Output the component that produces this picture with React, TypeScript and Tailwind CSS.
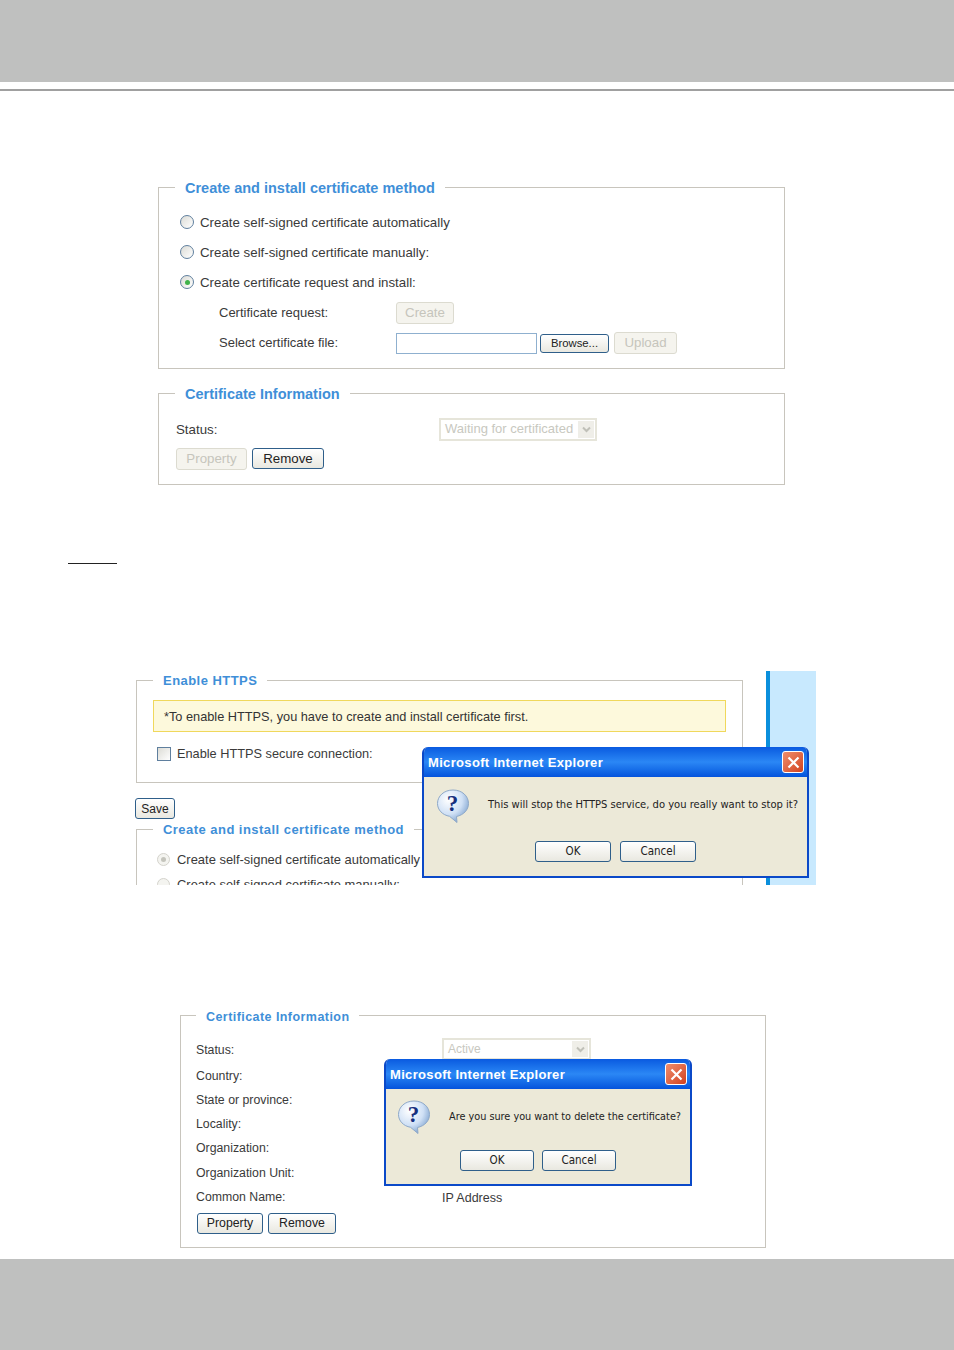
import type { ReactNode } from "react";

const sans = "font-['Liberation_Sans',Arial,sans-serif]";
const tahoma = "font-['DejaVu_Sans_Condensed','DejaVu_Sans',sans-serif]";

function Panel({ title, className, legendClass, children }: { title: string; className: string; legendClass: string; children: ReactNode }) {
  return (
    <fieldset className={`border border-[#c8c5bd] ${className}`}>
      <legend className={`font-bold leading-[16px] text-[#3f8fd8] ${legendClass}`}>{title}</legend>
      {children}
    </fieldset>
  );
}

function Radio({ checked, faded, size = "w-[14px] h-[14px]" }: { checked?: boolean; faded?: boolean; size?: string }) {
  return (
    <span
      className={`flex shrink-0 items-center justify-center rounded-full border ${size} ${
        faded ? "border-[#d4d3cc] bg-[#f4f4f0]" : "border-[#5f7f9e] bg-gradient-to-br from-[#dcdcd6] to-white"
      }`}
    >
      {checked && <span className={`h-[5px] w-[5px] rounded-full ${faded ? "bg-[#c4c4bc]" : "bg-[#3fb24a]"}`} />}
    </span>
  );
}

function Btn({ children, className, disabled }: { children: ReactNode; className: string; disabled?: boolean }) {
  return (
    <div
      className={`flex shrink-0 items-center justify-center rounded-[3px] border ${
        disabled
          ? "border-[#dcdbd0] bg-[#f5f4ee] text-[#c6c5bc]"
          : "border-[#2f5f8a] bg-gradient-to-b from-white to-[#e9e8e0] text-[#222]"
      } ${className}`}
    >
      {children}
    </div>
  );
}

function DisabledSelect({ label, className }: { label: string; className: string }) {
  return (
    <div className={`flex items-center border-2 border-[#e6e5da] bg-white p-px text-[#c8c8c0] ${className}`}>
      <span className="flex-1 whitespace-nowrap pl-[3px]">{label}</span>
      <span className="flex h-full w-[16px] shrink-0 items-center justify-center bg-[#efeee8]">
        <svg width="9" height="7" viewBox="0 0 9 7" fill="none" stroke="#c0c0b8" strokeWidth="2">
          <path d="M1 1.500 4.500 5 8 1.500" />
        </svg>
      </span>
    </div>
  );
}

function QuestionIcon() {
  return (
    <svg width="34" height="34" viewBox="0 0 34 34" className="shrink-0">
      <defs>
        <radialGradient id="bubble" cx="35%" cy="30%" r="75%">
          <stop offset="0%" stopColor="#ffffff" />
          <stop offset="60%" stopColor="#cfe0f5" />
          <stop offset="100%" stopColor="#7fa3cf" />
        </radialGradient>
      </defs>
      <path
        d="M17 1C8 1 1.500 7 1.500 14.500 1.500 21 6.500 26 13.500 27.300L21 33.500 20.500 27.500C27.500 26 32.500 21 32.500 14.500 32.500 7 26 1 17 1Z"
        fill="url(#bubble)"
        stroke="#8fa9c8"
      />
      <text x="16.500" y="22" textAnchor="middle" fontSize="23" fontWeight="700" fontFamily="'Liberation Serif',serif" fill="#16307f">
        ?
      </text>
    </svg>
  );
}

function Dialog({ message, className, iconClass, messageClass, footerClass, okClass, cancelClass }: {
  message: string;
  className: string;
  iconClass: string;
  messageClass: string;
  footerClass: string;
  okClass: string;
  cancelClass: string;
}) {
  return (
    <div className={`absolute flex flex-col overflow-hidden rounded-t-[6px] border-[2px] border-t-0 border-[#0b49c8] bg-[#ece9d8] ${tahoma} ${className}`}>
      <div className="-mx-[2px] flex h-[30px] shrink-0 items-center justify-between bg-gradient-to-b from-[#0a5ae0] via-[#2b87f5] to-[#0553dc] pl-[6px] pr-[5px]">
        <span className={`${sans} translate-y-px text-[13px] font-bold tracking-[0.33px] text-white`}>Microsoft Internet Explorer</span>
        <span className="flex h-[22px] w-[22px] items-center justify-center rounded-[3px] border border-white bg-gradient-to-br from-[#ee8d6c] to-[#d2401a]">
          <svg width="13" height="13" viewBox="0 0 13 13" stroke="#fff" strokeWidth="2.200">
            <path d="M1.500 1.500 11.500 11.500M11.500 1.500 1.500 11.500" />
          </svg>
        </span>
      </div>
      <div className={`flex items-center ${iconClass}`}>
        <QuestionIcon />
        <span className={`ml-[18px] whitespace-nowrap text-[#222] ${messageClass}`}>{message}</span>
      </div>
      <div className={`flex justify-center text-[11.500px] ${footerClass}`}>
        <Btn className={okClass}>OK</Btn>
        <Btn className={cancelClass}>Cancel</Btn>
      </div>
    </div>
  );
}

const certRows = ["Country:", "State or province:", "Locality:", "Organization:", "Organization Unit:", "Common Name:"];

export default function App() {
  return (
    <div className={`flex h-[1350px] w-[954px] flex-col overflow-hidden bg-white ${sans} text-[#3a3a3a]`}>
      <div className="h-[82px] shrink-0 bg-[#bfc0bf]" />
      <div className="mt-[7px] h-[2px] shrink-0 bg-[#a0a0a0]" />

      {/* Method and certificate panels */}
      <div className="ml-[158px] mt-[88px] flex w-[627px] flex-col text-[13.300px]">
        <Panel title="Create and install certificate method" className="h-[190px] px-[21px]" legendClass="-ml-[5px] translate-y-px px-[10px] text-[14.500px]">
          <div className="flex flex-col pt-[12px]">
            <label className="flex h-[30px] items-center gap-[6px]"><Radio /><span className="translate-y-px">Create self-signed certificate automatically</span></label>
            <label className="flex h-[30px] items-center gap-[6px]"><Radio /><span className="translate-y-px">Create self-signed certificate manually:</span></label>
            <label className="flex h-[30px] items-center gap-[6px]"><Radio checked /><span className="translate-y-px">Create certificate request and install:</span></label>
            <div className="mt-px flex h-[30px] items-center pl-[39px] text-[13px]">
              <span className="w-[177px]">Certificate request:</span>
              <Btn disabled className="h-[22px] w-[58px] text-[13.300px]">Create</Btn>
            </div>
            <div className="flex h-[30px] items-center pl-[39px] text-[13px]">
              <span className="w-[177px]">Select certificate file:</span>
              <div className="h-[21px] w-[141px] border border-[#8fb0cf] bg-white" />
              <Btn className="ml-[3px] h-[19px] w-[69px] text-[11.300px]">Browse...</Btn>
              <Btn disabled className="ml-[5px] h-[22px] w-[63px] text-[13.300px]">Upload</Btn>
            </div>
          </div>
        </Panel>

        <Panel title="Certificate Information" className="mt-[16px] h-[100px] px-[17px]" legendClass="-ml-px translate-y-px px-[10px] text-[14.500px]">
          <div className="flex h-[40px] items-center pt-[16px]">
            <span className="w-[263px] translate-y-px">Status:</span>
            <DisabledSelect label="Waiting for certificated" className="h-[23px] w-[158px] text-[13px]" />
          </div>
          <div className="mt-[7px] flex gap-[5px]">
            <Btn disabled className="h-[22px] w-[71px]">Property</Btn>
            <Btn className="h-[21px] w-[72px]">Remove</Btn>
          </div>
        </Panel>
      </div>

      <div className="ml-[68px] mt-[78px] h-px w-[49px] shrink-0 bg-[#222]" />

      {/* Stop HTTPS screenshot */}
      <div className="relative ml-[135px] mt-[107px] flex h-[214px] w-[681px] shrink-0 overflow-hidden text-[12.750px]">
        <div className="w-[608px] shrink-0 pl-px pt-px">
          <Panel title="Enable HTTPS" className="h-[111px] w-[607px] pl-[16px] pr-[16px]" legendClass="translate-y-px px-[10px] text-[13px] tracking-[0.46px]">
            <div className="mt-[12px] flex h-[32px] items-center border border-[#f0d85c] bg-[#fdf9dc] pl-[10px] text-[#333]">
              <span className="translate-y-px">*To enable HTTPS, you have to create and install certificate first.</span>
            </div>
            <label className="mt-[12px] flex items-center gap-[6px] pl-[4px]">
              <span className="h-[14px] w-[14px] border border-[#5f7f9e] bg-gradient-to-br from-[#dcdcd6] to-white" />
              Enable HTTPS secure connection:
            </label>
          </Panel>
          <Btn className="-ml-px mt-[15px] h-[21px] w-[40px] text-[12px]">Save</Btn>
          <Panel title="Create and install certificate method" className="mt-[2px] h-[120px] w-[607px] pl-[20px] text-[12.950px]" legendClass="-ml-[4px] translate-y-px px-[10px] text-[13px] tracking-[0.46px]">
            <label className="mt-[10px] flex h-[24px] items-center gap-[7px] whitespace-nowrap"><Radio checked faded size="h-[13px] w-[13px]" /><span className="translate-y-px">Create self-signed certificate automatically</span></label>
            <label className="mt-[1px] flex h-[24px] items-center gap-[7px] whitespace-nowrap"><Radio faded size="h-[13px] w-[13px]" /><span className="translate-y-px">Create self-signed certificate manually:</span></label>
          </Panel>
        </div>
        <div className="ml-[23px] w-[50px] shrink-0 border-l-[4px] border-[#0a8fdc] bg-[#c8e9fe]" />
        <Dialog
          message="This will stop the HTTPS service, do you really want to stop it?"
          className="left-[287px] top-[76px] h-[131px] w-[387px]"
          iconClass="h-[58px] pl-[12px]"
          messageClass="-translate-y-px text-[11.100px]"
          footerClass="mt-[6px] gap-[9px]"
          okClass="h-[21px] w-[76px]"
          cancelClass="h-[21px] w-[76px]"
        />
      </div>

      {/* Delete certificate screenshot */}
      <div className="relative ml-[180px] mt-[122px] w-[586px] shrink-0 text-[12.300px]">
        <Panel title="Certificate Information" className="h-[241px] pl-[15px]" legendClass="translate-y-[2px] px-[10px] text-[12.500px] tracking-[0.44px]">
          <div className="mt-[15px] flex h-[22px] items-center">
            <span className="w-[246px] pt-[2px]">Status:</span>
            <DisabledSelect label="Active" className="h-[22px] w-[149px] text-[12px]" />
          </div>
          <div className="mt-[4px] flex flex-col">
            {certRows.map((row) => (
              <div key={row} className="flex h-[24.200px] items-center">
                <span className="w-[246px]">{row}</span>
                {row === "Common Name:" && <span className="pt-[2px] text-[12.500px]">IP Address</span>}
              </div>
            ))}
          </div>
          <div className="mt-[4px] flex gap-[5px] pl-px">
            <Btn className="h-[21px] w-[66px]">Property</Btn>
            <Btn className="h-[21px] w-[68px]">Remove</Btn>
          </div>
        </Panel>
        <Dialog
          message="Are you sure you want to delete the certificate?"
          className="left-[204px] top-[52px] h-[127px] w-[308px]"
          iconClass="h-[55px] pl-[11px]"
          messageClass="translate-y-px text-[10.800px]"
          footerClass="mt-[6px] gap-[8px]"
          okClass="h-[21px] w-[74px]"
          cancelClass="h-[21px] w-[74px]"
        />
      </div>

      <div className="mt-auto h-[91px] shrink-0 bg-[#bfc0bf]" />
    </div>
  );
}
